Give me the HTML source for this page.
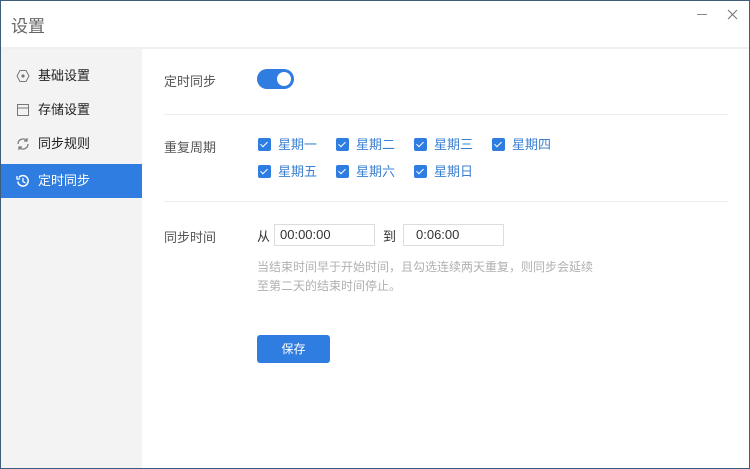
<!DOCTYPE html>
<html><head><meta charset="utf-8"><style>
*{margin:0;padding:0;box-sizing:border-box}
body{width:750px;height:469px;overflow:hidden;background:#fff;font-family:"Liberation Sans","Noto Sans CJK SC",sans-serif;position:relative}
.frame{position:absolute;left:0;top:0;width:750px;height:469px;border:1px solid #3e5c7c}
.title{position:absolute;left:11px;top:12px;font-size:17px;color:#666}
.hline{position:absolute;left:1px;right:1px;top:47px;height:2px;background:#f0f0f0}
.side{position:absolute;left:1px;top:49px;width:141px;height:419px;background:#f3f3f3}
.item{position:absolute;left:0;width:141px;height:34px;font-size:13px;color:#222;line-height:34px;padding-left:37px}
.item.act{background:#2f7de1;color:#fff}
.item svg{position:absolute;left:15px;top:10px}
.lbl{position:absolute;left:164px;font-size:13px;color:#555}
.div{position:absolute;left:164px;width:564px;height:1px;background:#ececec}
.tog{position:absolute;left:257px;top:69px;width:37px;height:20px;border-radius:10px;background:#2f7de1}
.tog:after{content:"";position:absolute;right:3px;top:3px;width:14px;height:14px;border-radius:50%;background:#fff}
.cb{position:absolute;font-size:13px;color:#3b7fd0;line-height:14px}
.cb i{position:absolute;left:-1px;top:0;width:13px;height:13px;background:#2f7de1;border-radius:2px}
.cb i:after{content:"";position:absolute;left:4px;top:2px;width:3px;height:6px;border:solid #fff;border-width:0 1.5px 1.5px 0;transform:rotate(45deg)}
.cb span{position:absolute;left:19px;top:0;white-space:nowrap}
.inp{position:absolute;top:224px;height:22px;border:1px solid #ddd;font-size:13px;color:#333;line-height:20px;padding-left:5px}
.hint{position:absolute;left:257px;top:258px;font-size:12px;color:#b0b0b0;line-height:19px}
.btn{position:absolute;left:257px;top:335px;width:73px;height:28px;background:#2f7de1;border-radius:3px;color:#fff;font-size:12px;text-align:center;line-height:28px}
</style></head><body>
<div class="title">设置</div>
<div style="position:absolute;left:697px;top:14px;width:10px;height:1px;background:#888"></div>
<svg style="position:absolute;left:727px;top:9px" width="11" height="11"><path d="M1 1L10 10M10 1L1 10" stroke="#777" stroke-width="1.1"/></svg>
<div class="hline"></div>
<div class="side">
<div class="item" style="top:10px"><svg width="14" height="14"><polygon points="4,1.5 10,1.5 13,7 10,12.5 4,12.5 1,7" fill="none" stroke="#777"/><circle cx="7" cy="7" r="1.6" fill="#777"/></svg>基础设置</div>
<div class="item" style="top:44px"><svg width="14" height="14"><rect x="1.5" y="1.5" width="11" height="11" fill="none" stroke="#777"/><path d="M1.5 5H12.5" stroke="#777"/></svg>存储设置</div>
<div class="item" style="top:78px"><svg width="14" height="14"><path d="M2 7A5 5 0 0 1 11 4M12 7A5 5 0 0 1 3 10" fill="none" stroke="#777" stroke-width="1.2"/><path d="M11 1V4H8M3 13V10H6" fill="none" stroke="#777" stroke-width="1.2"/></svg>同步规则</div>
<div class="item act" style="top:115px"><svg width="14" height="14"><path d="M3 3.5A5.2 5.2 0 1 1 1.8 7.5" fill="none" stroke="#fff" stroke-width="1.5"/><path d="M1 2V5H4" fill="none" stroke="#fff" stroke-width="1.3"/><path d="M7 4V7.5L9.5 9" fill="none" stroke="#fff" stroke-width="1.3"/></svg>定时同步</div>
</div>
<div class="lbl" style="top:71px">定时同步</div>
<div class="tog"></div>
<div class="div" style="top:114px"></div>
<div class="lbl" style="top:137px">重复周期</div>
<div class="cb" style="left:259px;top:138px"><i></i><span>星期一</span></div>
<div class="cb" style="left:337px;top:138px"><i></i><span>星期二</span></div>
<div class="cb" style="left:415px;top:138px"><i></i><span>星期三</span></div>
<div class="cb" style="left:493px;top:138px"><i></i><span>星期四</span></div>
<div class="cb" style="left:259px;top:165px"><i></i><span>星期五</span></div>
<div class="cb" style="left:337px;top:165px"><i></i><span>星期六</span></div>
<div class="cb" style="left:415px;top:165px"><i></i><span>星期日</span></div>
<div class="div" style="top:201px"></div>
<div class="lbl" style="top:227px">同步时间</div>
<div style="position:absolute;left:257px;top:226px;font-size:13px;color:#333">从</div>
<div class="inp" style="left:274px;width:101px">00:00:00</div>
<div style="position:absolute;left:383px;top:226px;font-size:13px;color:#333">到</div>
<div class="inp" style="left:403px;width:101px;padding-left:12px">0:06:00</div>
<div class="hint">当结束时间早于开始时间，且勾选连续两天重复，则同步会延续<br>至第二天的结束时间停止。</div>
<div class="btn">保存</div>
<div class="frame"></div>
</body></html>
